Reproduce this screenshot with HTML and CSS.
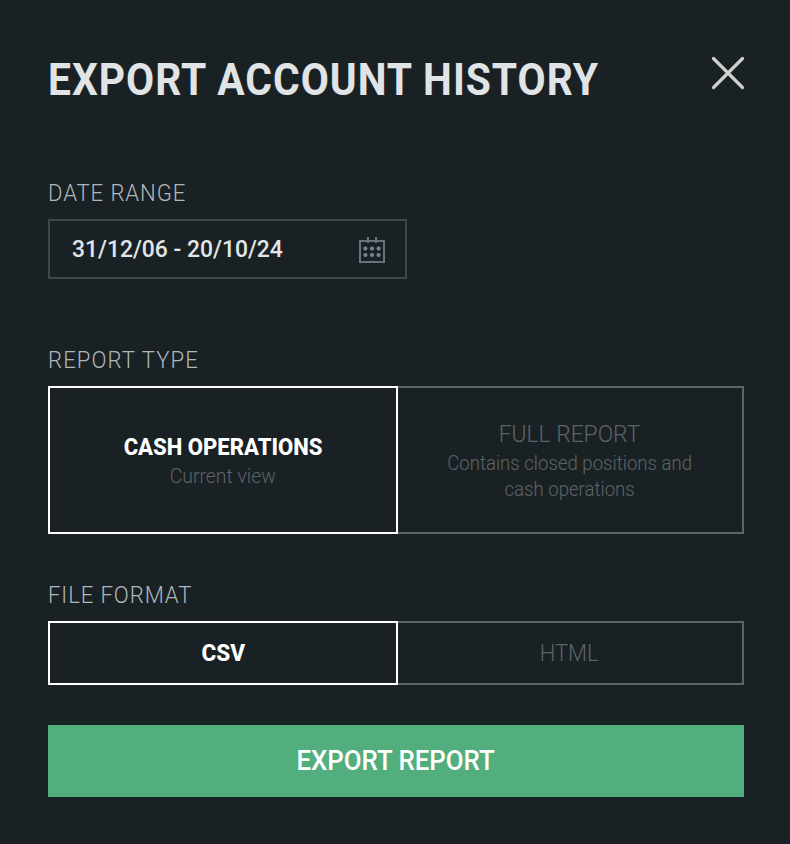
FILE: index.html
```html
<!DOCTYPE html>
<html lang="en">
<head>
<meta charset="utf-8">
<title>Export account history</title>
<link rel="stylesheet" href="styles.css">
</head>
<body>
<main class="dialog">
  <header class="header">
    <h1 class="title">EXPORT ACCOUNT HISTORY</h1>
    <button class="close" aria-label="Close">
      <svg width="34" height="34" viewBox="0 0 34 34"><path d="M2.5 2.5L31.5 31.5M31.5 2.5L2.5 31.5"/></svg>
    </button>
  </header>

  <section class="field field-range">
    <h2 class="label label-range">DATE RANGE</h2>
    <div class="date-input">
      <span class="date-value">31/12/06 - 20/10/24</span>
      <svg class="calendar" width="26" height="28" viewBox="0 0 26 28">
        <path class="frame" d="M1 5h24v21H1z"/>
        <path class="frame" d="M9 1v6M17 1v6"/>
        <g class="dots">
          <circle cx="6.4" cy="12.6" r="2.1"/><circle cx="13" cy="12.6" r="2.1"/><circle cx="19.6" cy="12.6" r="2.1"/>
          <circle cx="6.4" cy="19" r="2.1"/><circle cx="13" cy="19" r="2.1"/><circle cx="19.6" cy="19" r="2.1"/>
        </g>
      </svg>
    </div>
  </section>

  <section class="field field-report">
    <h2 class="label label-report">REPORT TYPE</h2>
    <div class="options options-tall">
      <button class="option selected">
        <span class="option-title title-cash">CASH OPERATIONS</span>
        <span class="option-note note-view">Current view</span>
      </button>
      <button class="option">
        <span class="option-title title-full">FULL REPORT</span>
        <span class="option-note">Contains closed positions and<br>cash operations</span>
      </button>
    </div>
  </section>

  <section class="field field-format">
    <h2 class="label label-format">FILE FORMAT</h2>
    <div class="options options-short">
      <button class="option selected"><span class="option-title title-csv">CSV</span></button>
      <button class="option"><span class="option-title title-html">HTML</span></button>
    </div>
  </section>

  <button class="export"><span class="export-text">EXPORT REPORT</span></button>
</main>
</body>
</html>
```
FILE: styles.css
```css
* {
  box-sizing: border-box;
}

body {
  margin: 0;
  background: #1a2124;
  font-family: Roboto, sans-serif;
}

button {
  margin: 0;
  padding: 0;
  border: 0;
  background: none;
  font-family: inherit;
}

svg {
  display: block;
}

.dialog {
  width: 790px;
  height: 844px;
  padding: 56px 46px 47px 48px;
}

.header {
  display: flex;
  justify-content: space-between;
  align-items: flex-start;
  height: 123px;
}

.title {
  margin: 0;
  color: #e0e4e6;
  font-size: 44px;
  font-weight: 700;
  line-height: 48px;
  letter-spacing: 1.05px;
  white-space: nowrap;
  transform: scaleX(0.927);
  transform-origin: left;
}

.close svg {
  margin-right: -1px;
  fill: none;
  stroke: #d0cfce;
  stroke-width: 3.2;
  stroke-linecap: round;
}

.label {
  margin: 0 0 12px;
  color: #b0b7ba;
  font-size: 24px;
  font-weight: 350;
  line-height: 28px;
  transform: scaleX(0.92);
  transform-origin: left;
}

.label-range {
  letter-spacing: 1px;
}

.label-report {
  letter-spacing: 1.2px;
}

.label-format {
  letter-spacing: 1px;
}

.date-input {
  display: flex;
  align-items: center;
  justify-content: space-between;
  width: 359px;
  height: 60px;
  padding: 0 20px 0 22px;
  border: 2px solid #3e484b;
}

.date-value {
  color: #e0e6e9;
  font-size: 24px;
  font-weight: 500;
  transform: scaleX(0.953);
  transform-origin: left;
}

.calendar {
  margin-top: 2px;
}

.frame {
  fill: none;
  stroke: #66757b;
  stroke-width: 2;
}

.dots {
  fill: #74858c;
}

.field-report {
  margin-top: 67px;
}

.field-format {
  margin-top: 47px;
}

.options {
  display: grid;
  grid-template-columns: 350px 346px;
  width: 696px;
}

.options-tall {
  height: 148px;
}

.options-short {
  height: 64px;
}

.option {
  display: flex;
  flex-direction: column;
  align-items: center;
  justify-content: center;
  border: 2px solid #5d6567;
  border-left: 0;
  color: #5c6467;
}

.option.selected {
  border: 2px solid #fff;
}

.option-title {
  font-size: 24px;
  font-weight: 350;
  line-height: 34px;
}

.selected .option-title {
  color: #fff;
  font-weight: 800;
}

.title-cash {
  transform: scaleX(0.92);
}

.title-full {
  transform: scaleX(0.95);
}

.title-csv {
  transform: scaleX(0.94);
}

.title-html {
  transform: translateX(-1px) scaleX(0.915);
}

.option-note {
  color: #5c6467;
  font-size: 20px;
  font-weight: 350;
  line-height: 26px;
  transform: translateY(-1px) scaleX(0.93);
}

.note-view {
  transform: translateY(-1px) scaleX(0.97);
}

.export {
  display: block;
  width: 696px;
  height: 72px;
  margin-top: 40px;
  background: #52ae7c;
  color: #fff;
  font-size: 28px;
  font-weight: 500;
  line-height: 70px;
}

.export-text {
  display: inline-block;
  transform: scaleX(0.922);
}
```
